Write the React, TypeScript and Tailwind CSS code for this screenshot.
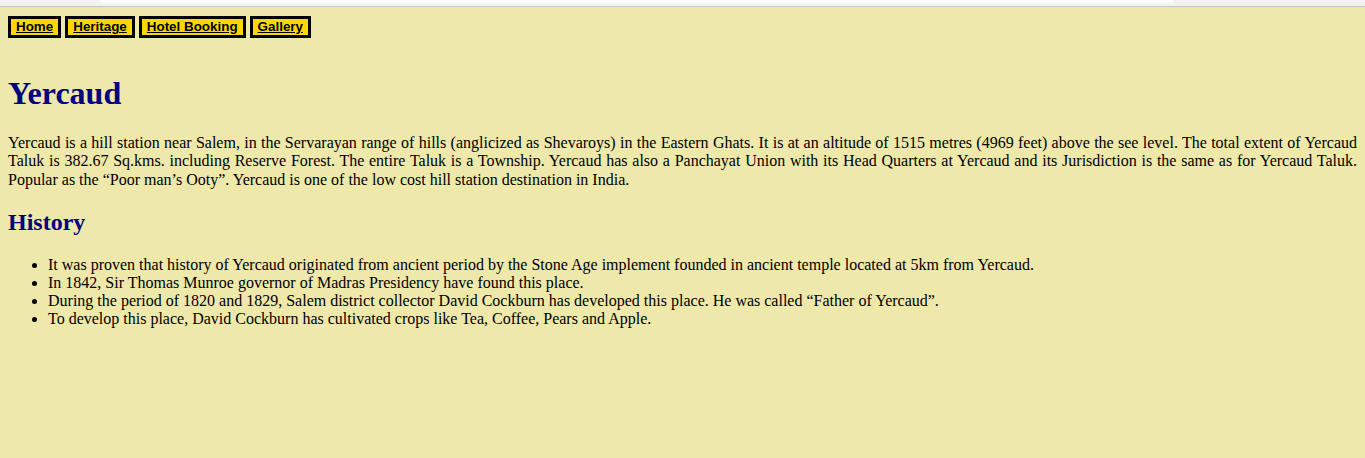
import React from "react";

const serif = { fontFamily: '"Liberation Serif", "Times New Roman", serif' };

export default function App() {
  const links = ["Home", "Heritage", "Hotel Booking", "Gallery"];
  return (
    <div className="min-h-[458px] bg-[#eee8aa] text-black" style={serif}>
      <div className="h-[6px] bg-[#f3f3f3] flex">
        <div className="w-[100px]" />
        <div className="w-[1073px] h-[3px] bg-white rounded-b-[3px]" />
      </div>
      <div className="h-px bg-[#c6c6c6]" />
      <div className="px-2">
        <div className="flex gap-1 mt-[9px]">
          {links.map((l) => (
            <a
              key={l}
              href="#"
              className="block h-[22px] px-[5px] border-[3px] border-black bg-[#ffd700] text-black underline font-bold text-[13.4px] leading-[16px]"
              style={{ fontFamily: '"Liberation Sans", Arial, sans-serif' }}
            >
              {l}
            </a>
          ))}
        </div>
        <h1 className="mt-[37px] text-[32px] leading-[37px] font-bold text-[#000080]">Yercaud</h1>
        <p className="mt-[22px] text-[16px] leading-[18.4px] text-justify">
          Yercaud is a hill station near Salem, in the Servarayan range of hills (anglicized as Shevaroys) in the Eastern Ghats. It is at an altitude of 1515 metres (4969 feet) above the see level. The total extent of Yercaud Taluk is 382.67 Sq.kms. including Reserve Forest. The entire Taluk is a Township. Yercaud has also a Panchayat Union with its Head Quarters at Yercaud and its Jurisdiction is the same as for Yercaud Taluk. Popular as the “Poor man’s Ooty”. Yercaud is one of the low cost hill station destination in India.
        </p>
        <h2 className="mt-[20px] text-[24px] leading-[27.6px] font-bold text-[#000080]">History</h2>
        <ul className="mt-[19px] list-disc pl-10 text-[16px] leading-[18px]">
          <li>It was proven that history of Yercaud originated from ancient period by the Stone Age implement founded in ancient temple located at 5km from Yercaud.</li>
          <li>In 1842, Sir Thomas Munroe governor of Madras Presidency have found this place.</li>
          <li>During the period of 1820 and 1829, Salem district collector David Cockburn has developed this place. He was called “Father of Yercaud”.</li>
          <li>To develop this place, David Cockburn has cultivated crops like Tea, Coffee, Pears and Apple.</li>
        </ul>
      </div>
    </div>
  );
}
